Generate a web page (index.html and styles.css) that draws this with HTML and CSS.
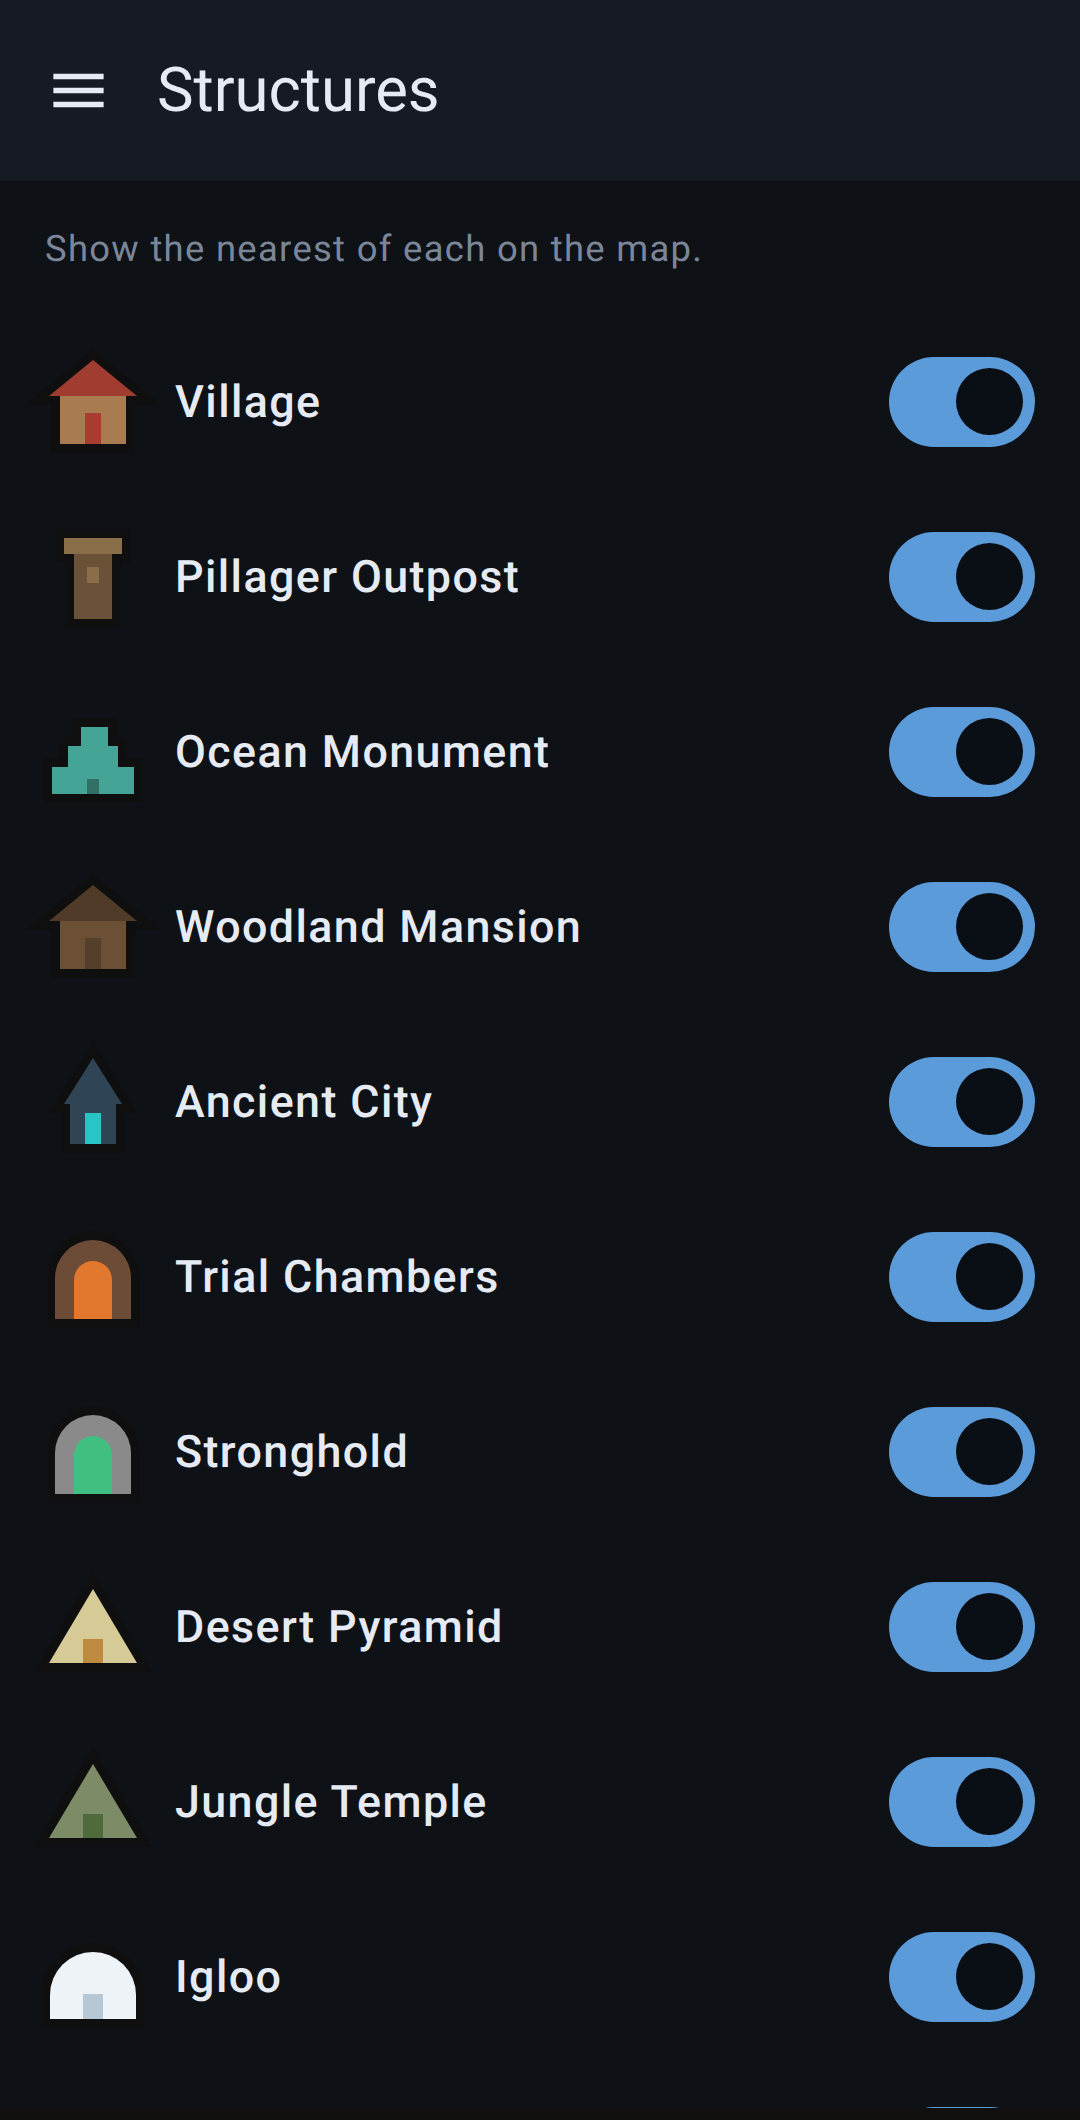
FILE: index.html
```html
<!DOCTYPE html>
<html lang="en">
<head>
  <meta charset="UTF-8" />
  <title>Structures</title>
  <link rel="stylesheet" href="styles.css">
</head>
<body>
  <div class="screen">
    <header class="top-bar">
      <svg class="menu-icon" viewBox="0 0 24 24"><path d="M3 18h18v-2H3v2zm0-5h18v-2H3v2zm0-7v2h18V6H3z"/></svg>
      <h1>Structures</h1>
    </header>

    <main class="content">
      <p class="hint">Show the nearest of each on the map.</p>

      <div class="row">
        <svg class="icon" viewBox="0 0 88 88">
          <g class="halo"><polygon points="44,2 88,38 0,38"/><rect x="11" y="38" width="66" height="48"/></g>
          <polygon fill="#a03c30" points="44,2 88,38 0,38"/>
          <rect fill="#a87b50" x="11" y="38" width="66" height="48"/>
          <rect fill="#a83c30" x="36" y="55" width="16" height="31"/>
        </svg>
        <span class="name">Village</span>
        <div class="toggle"><div class="knob"></div></div>
      </div>

      <div class="row">
        <svg class="icon" viewBox="0 0 88 88">
          <g class="halo"><rect x="15" y="5" width="58" height="16"/><rect x="25" y="21" width="38" height="65"/></g>
          <rect fill="#6b5138" x="25" y="21" width="38" height="65"/>
          <rect fill="#8a6e49" x="15" y="5" width="58" height="16"/>
          <rect fill="#8a6e49" x="38" y="34" width="12" height="16"/>
        </svg>
        <span class="name">Pillager Outpost</span>
        <div class="toggle"><div class="knob"></div></div>
      </div>

      <div class="row">
        <svg class="icon" viewBox="0 0 88 88">
          <g class="halo"><rect x="32" y="19" width="27" height="19"/><rect x="19" y="38" width="50" height="21"/><rect x="3" y="59" width="82" height="27"/></g>
          <rect fill="#44a596" x="32" y="19" width="27" height="19"/>
          <rect fill="#44a596" x="19" y="38" width="50" height="21"/>
          <rect fill="#44a596" x="3" y="59" width="82" height="27"/>
          <rect fill="#327066" x="38" y="71" width="12" height="15"/>
        </svg>
        <span class="name">Ocean Monument</span>
        <div class="toggle"><div class="knob"></div></div>
      </div>

      <div class="row">
        <svg class="icon" viewBox="0 0 88 88">
          <g class="halo"><polygon points="44,2 88,38 0,38"/><rect x="11" y="38" width="66" height="48"/></g>
          <polygon fill="#4f3b27" points="44,2 88,38 0,38"/>
          <rect fill="#6b5036" x="11" y="38" width="66" height="48"/>
          <rect fill="#533f2b" x="36" y="55" width="16" height="31"/>
        </svg>
        <span class="name">Woodland Mansion</span>
        <div class="toggle"><div class="knob"></div></div>
      </div>

      <div class="row">
        <svg class="icon" viewBox="0 0 88 88">
          <g class="halo"><polygon points="44,0 73,46 15,46"/><rect x="21" y="46" width="46" height="40"/></g>
          <polygon fill="#2f4556" points="44,0 73,46 15,46"/>
          <rect fill="#2f4556" x="21" y="46" width="46" height="40"/>
          <rect fill="#26c6c6" x="36" y="55" width="16" height="31"/>
        </svg>
        <span class="name">Ancient City</span>
        <div class="toggle"><div class="knob"></div></div>
      </div>

      <div class="row">
        <svg class="icon" viewBox="0 0 88 88">
          <g class="halo"><path d="M6 86V45a38 38 0 0 1 76 0V86z"/></g>
          <path fill="#6d4c37" d="M6 86V45a38 38 0 0 1 76 0V86z"/>
          <path fill="#e2772e" d="M25 86V47a19 19 0 0 1 38 0V86z"/>
        </svg>
        <span class="name">Trial Chambers</span>
        <div class="toggle"><div class="knob"></div></div>
      </div>

      <div class="row">
        <svg class="icon" viewBox="0 0 88 88">
          <g class="halo"><path d="M6 86V45a38 38 0 0 1 76 0V86z"/></g>
          <path fill="#8a8a8a" d="M6 86V45a38 38 0 0 1 76 0V86z"/>
          <path fill="#41bf80" d="M25 86V47a19 19 0 0 1 38 0V86z"/>
        </svg>
        <span class="name">Stronghold</span>
        <div class="toggle"><div class="knob"></div></div>
      </div>

      <div class="row">
        <svg class="icon" viewBox="0 0 88 88">
          <g class="halo"><polygon points="44,6 88,80 0,80"/></g>
          <polygon fill="#d6cb96" points="44,6 88,80 0,80"/>
          <rect fill="#bd8a3f" x="34" y="56" width="20" height="24"/>
        </svg>
        <span class="name">Desert Pyramid</span>
        <div class="toggle"><div class="knob"></div></div>
      </div>

      <div class="row">
        <svg class="icon" viewBox="0 0 88 88">
          <g class="halo"><polygon points="44,6 88,80 0,80"/></g>
          <polygon fill="#7d8c66" points="44,6 88,80 0,80"/>
          <rect fill="#4f6b3b" x="34" y="56" width="20" height="24"/>
        </svg>
        <span class="name">Jungle Temple</span>
        <div class="toggle"><div class="knob"></div></div>
      </div>

      <div class="row">
        <svg class="icon" viewBox="0 0 88 88">
          <g class="halo"><path d="M1 86V62a43 43 0 0 1 86 0V86z"/></g>
          <path fill="#eef3f7" d="M1 86V62a43 43 0 0 1 86 0V86z"/>
          <rect fill="#b6c8d6" x="34" y="61" width="20" height="25"/>
        </svg>
        <span class="name">Igloo</span>
        <div class="toggle"><div class="knob"></div></div>
      </div>

      <div class="row">
        <div class="toggle toggle-end"><div class="knob"></div></div>
      </div>
    </main>

    <div class="nav-strip"></div>
  </div>
</body>
</html>
```

FILE: styles.css
```css
html, body {
  margin: 0;
  padding: 0;
}

.screen {
  width: 1080px;
  height: 2120px;
  display: flex;
  flex-direction: column;
  overflow: hidden;
  background-color: #0e1116;
  font-family: Roboto, "Liberation Sans", sans-serif;
  text-rendering: geometricPrecision;
}

.top-bar {
  flex: none;
  height: 181px;
  display: flex;
  align-items: center;
  gap: 45px;
  padding-left: 45px;
  background-color: #151a23;
}

.menu-icon {
  width: 67px;
  height: 67px;
  fill: #e6ebf3;
}

.top-bar h1 {
  margin: 0;
  font-size: 61.6px;
  font-weight: 400;
  color: #e6ebf3;
}

.content {
  flex: 1;
  min-height: 0;
  overflow: hidden;
  padding: 45px 45px 0;
}

.hint {
  margin: 0 0 42px;
  height: 46px;
  line-height: 46px;
  font-size: 36.4px;
  letter-spacing: 1.32px;
  color: #7b8798;
}

.row {
  height: 175px;
  display: flex;
  align-items: center;
}

.icon {
  flex: none;
  width: 88px;
  height: 88px;
  margin-left: 4px;
  overflow: visible;
}

.halo {
  fill: #0f0f10;
  stroke: #0f0f10;
  stroke-width: 17;
  stroke-linejoin: miter;
}

.name {
  flex: 1;
  margin-left: 38px;
  font-size: 44.8px;
  font-weight: 500;
  letter-spacing: 1.4px;
  color: #e6ebf3;
}

.toggle {
  flex: none;
  width: 146px;
  height: 90px;
  display: flex;
  align-items: center;
  justify-content: flex-end;
  box-sizing: border-box;
  padding-right: 12px;
  border-radius: 45px;
  background-color: #5b9bd9;
}

.toggle-end {
  margin-left: auto;
}

.knob {
  width: 67px;
  height: 67px;
  border-radius: 50%;
  background-color: #0a0f16;
}

.nav-strip {
  flex: none;
  height: 12px;
  background-color: #11100f;
}
```
